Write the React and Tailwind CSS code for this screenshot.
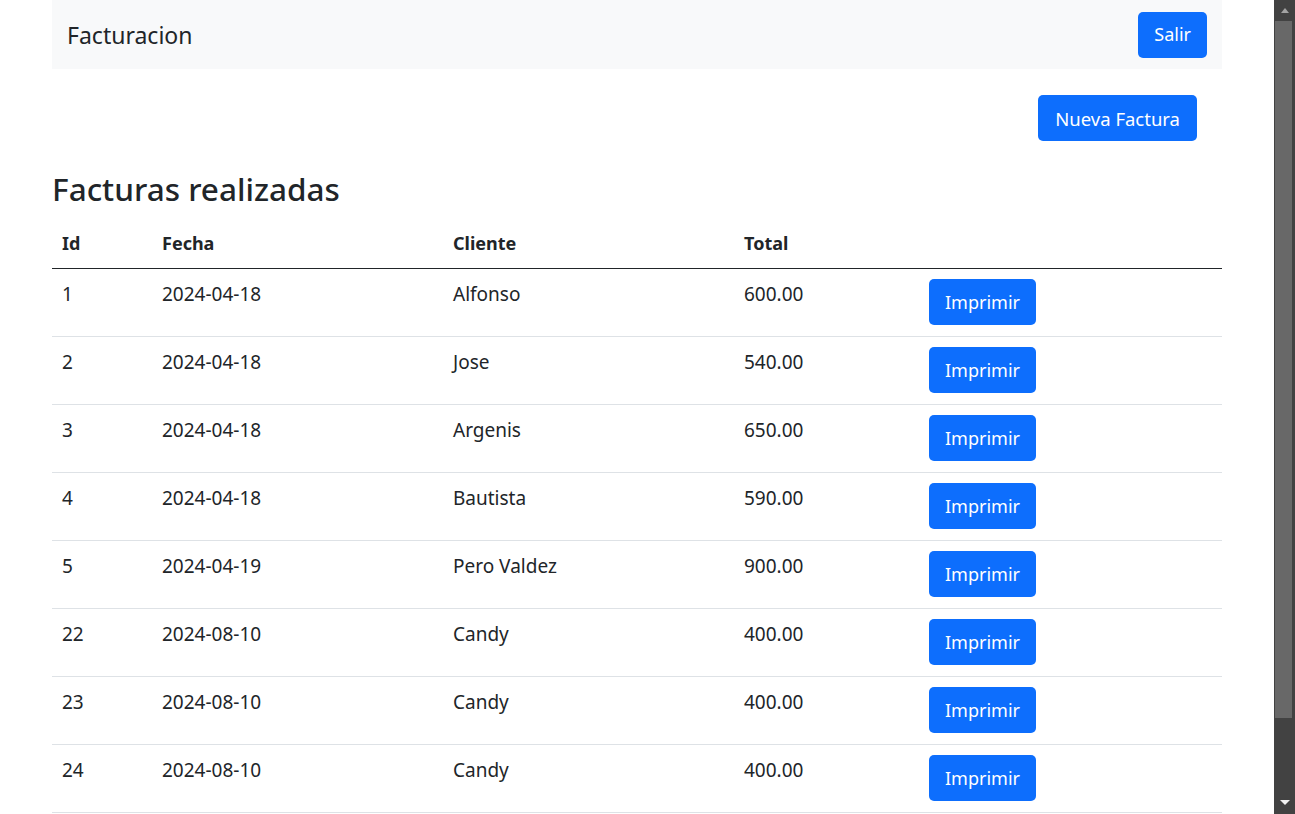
import React from 'react';

const facturas = [
  { id: 1, fecha: '2024-04-18', cliente: 'Alfonso', total: '600.00' },
  { id: 2, fecha: '2024-04-18', cliente: 'Jose', total: '540.00' },
  { id: 3, fecha: '2024-04-18', cliente: 'Argenis', total: '650.00' },
  { id: 4, fecha: '2024-04-18', cliente: 'Bautista', total: '590.00' },
  { id: 5, fecha: '2024-04-19', cliente: 'Pero Valdez', total: '900.00' },
  { id: 22, fecha: '2024-08-10', cliente: 'Candy', total: '400.00' },
  { id: 23, fecha: '2024-08-10', cliente: 'Candy', total: '400.00' },
  { id: 24, fecha: '2024-08-10', cliente: 'Candy', total: '400.00' },
];

const cols = 'grid grid-cols-[100px_291px_291px_186px_302px]';

const BlueButton = ({ children, className = 'px-[16px] text-[18px]' }) => (
  <button className={`h-[46px] rounded-[5px] bg-[#0d6efd] text-white leading-[27px] whitespace-nowrap ${className}`}>
    {children}
  </button>
);

const Scrollbar = () => (
  <div className="w-[21px] h-full bg-[#424242] flex flex-col items-center shrink-0">
    <div className="h-[21px] w-full flex items-center justify-center">
      <div className="w-0 h-0 border-l-[4px] border-r-[4px] border-b-[5px] border-l-transparent border-r-transparent border-b-[#a3a3a3]" />
    </div>
    <div className="w-[17px] h-[697px] bg-[#686868] ml-[1px] mr-[3px] self-start" />
    <div className="flex-1" />
    <div className="h-[24px] w-full flex items-center justify-center">
      <div className="w-0 h-0 border-l-[5px] border-r-[5px] border-t-[5px] border-l-transparent border-r-transparent border-t-[#f2f2f2]" />
    </div>
  </div>
);

export default function App() {
  return (
    <div className="flex w-full h-[814px] overflow-hidden bg-white text-[#212529]" style={{ fontFamily: '"Noto Sans", "Open Sans", sans-serif' }}>
      <div className="flex-1 overflow-hidden">
        <div className="w-[1170px] mx-auto">
          <nav className="h-[69px] bg-[#f8f9fa] flex items-center justify-between pl-[15px] pr-[15px]">
            <span className="text-[23px] leading-[34px]">Facturacion</span>
            <BlueButton>Salir</BlueButton>
          </nav>

          <div className="flex justify-end pr-[25px] mt-[26px]">
            <BlueButton className="px-[17px] text-[18.5px]">Nueva Factura</BlueButton>
          </div>

          <h2 className="mt-[29px] text-[31.5px] leading-[38px] font-medium">Facturas realizadas</h2>

          <div className="mt-[12px]">
            <div className={`${cols} border-b border-[#212529] font-bold text-[18px] leading-[27px]`}>
              {['Id', 'Fecha', 'Cliente', 'Total', ''].map((h, i) => (
                <div key={i} className="px-[10px] pt-[10px] pb-[11px]">{h}</div>
              ))}
            </div>
            {facturas.map(f => (
              <div key={f.id} className={`${cols} border-b border-[#dee2e6] text-[19px] leading-[31px]`}>
                <div className="px-[10px] pt-[10px] pb-[11px]">{f.id}</div>
                <div className="px-[10px] pt-[10px] pb-[11px]">{f.fecha}</div>
                <div className="px-[10px] pt-[10px] pb-[11px]">{f.cliente}</div>
                <div className="px-[10px] pt-[10px] pb-[11px]">{f.total}</div>
                <div className="px-[9px] pt-[10px] pb-[11px]">
                  <BlueButton>Imprimir</BlueButton>
                </div>
              </div>
            ))}
          </div>
        </div>
      </div>
      <Scrollbar />
    </div>
  );
}
